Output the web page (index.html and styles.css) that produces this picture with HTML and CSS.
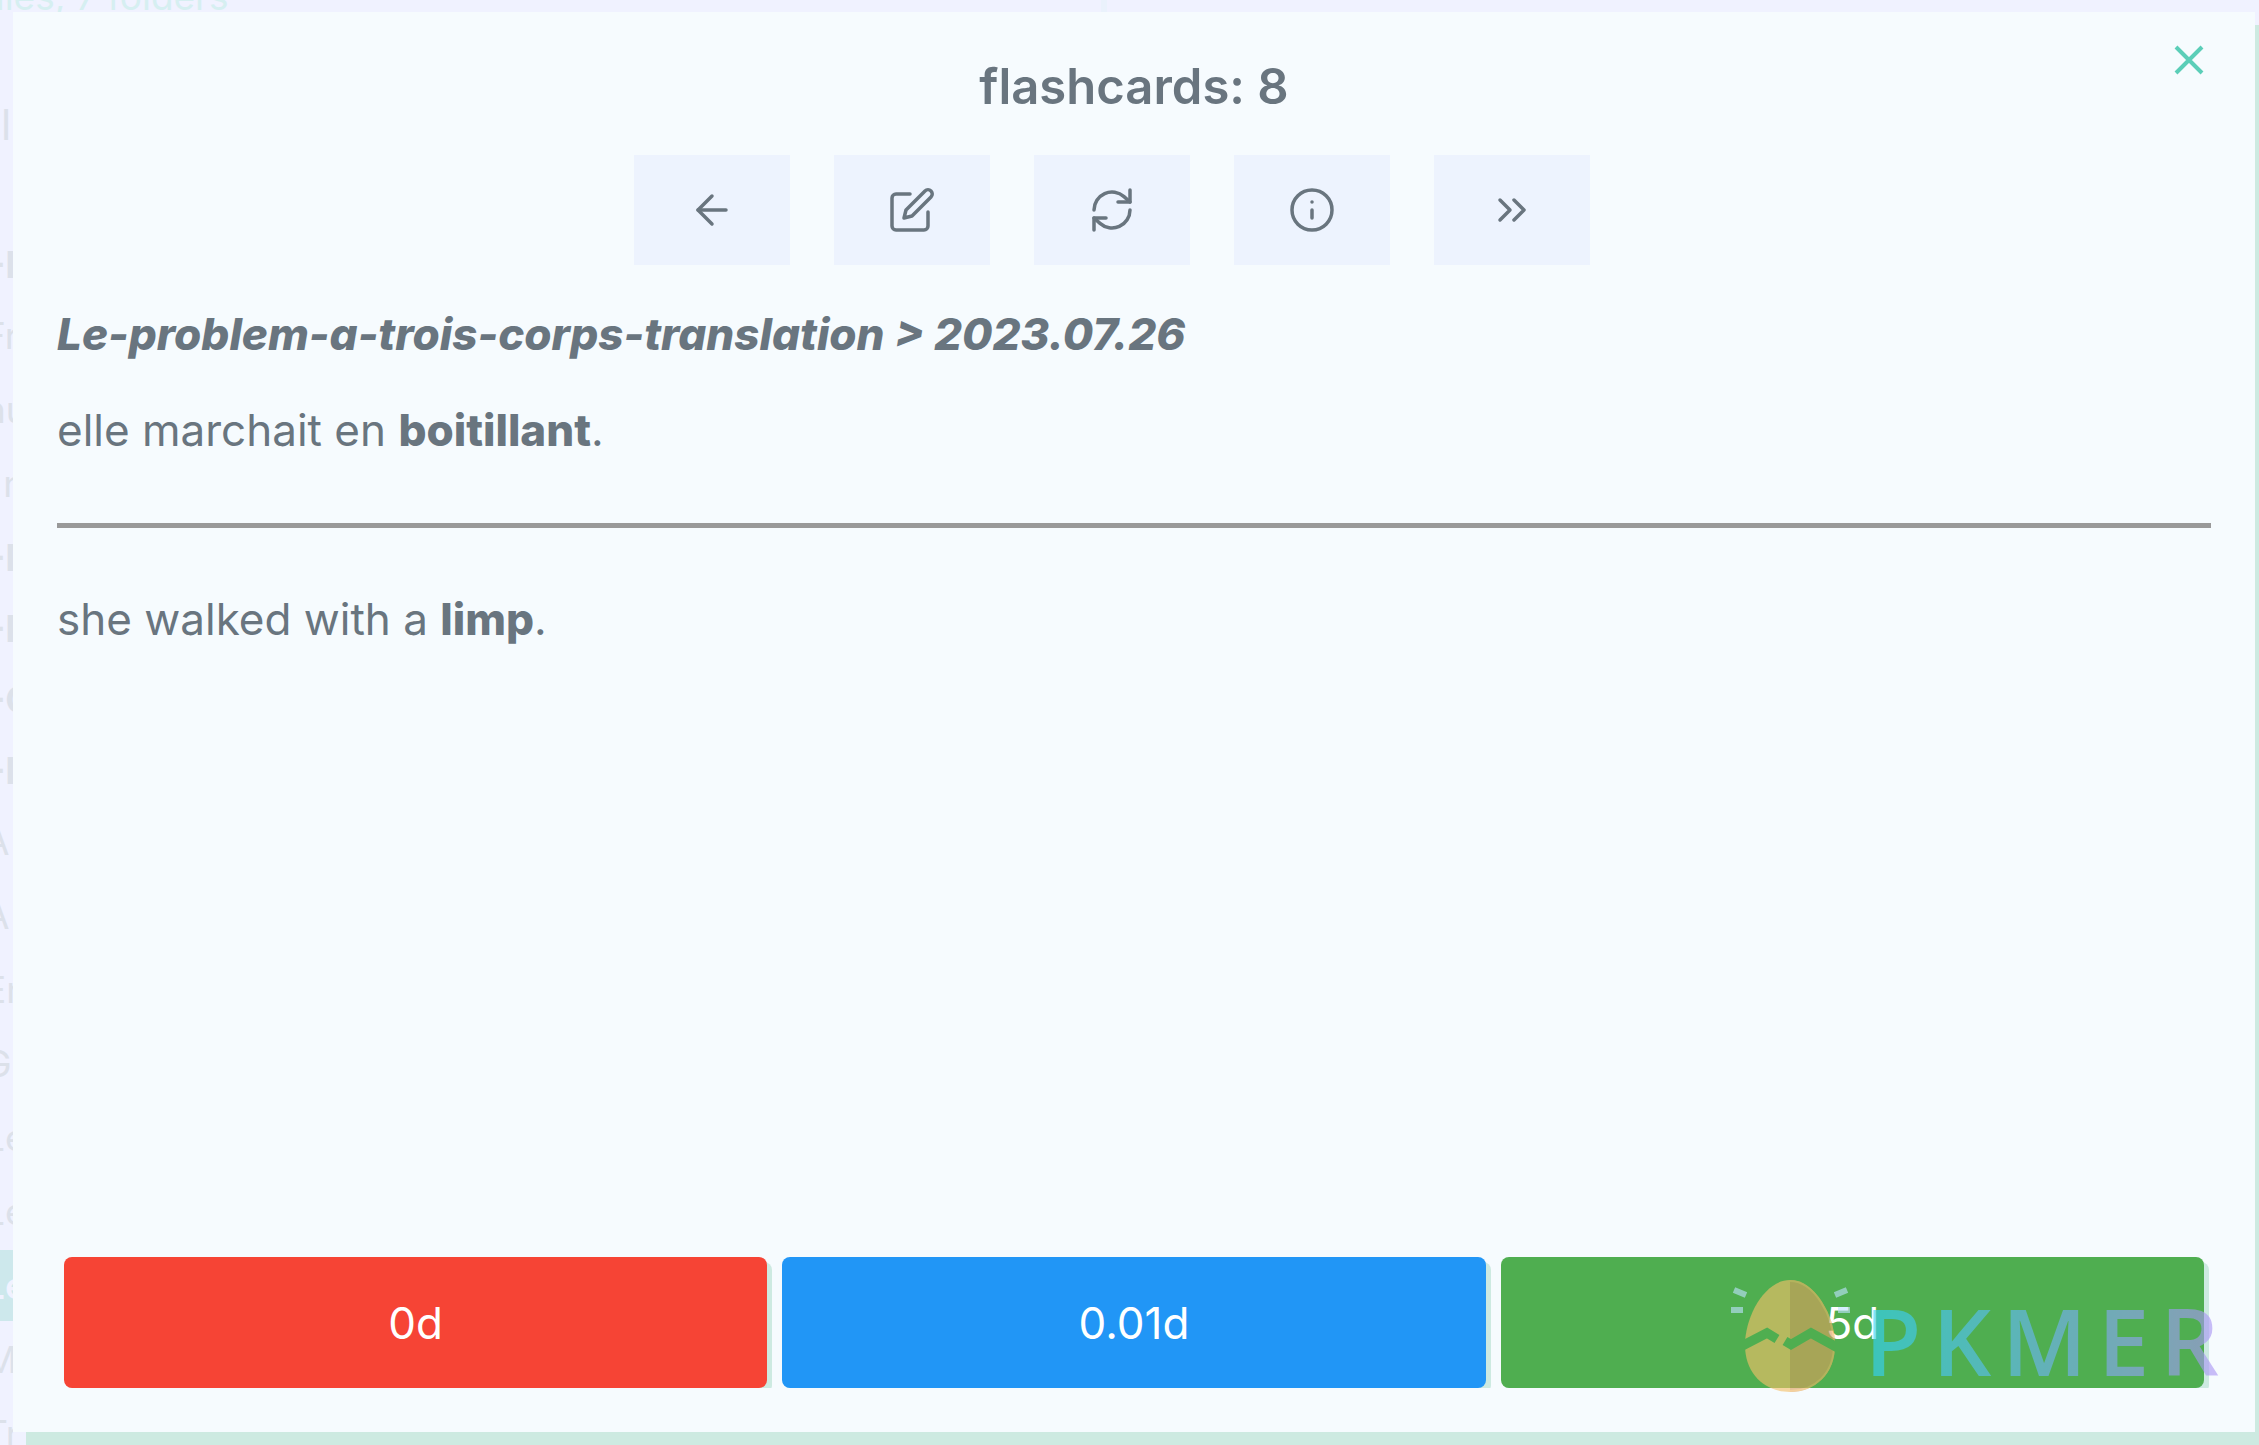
FILE: index.html
```html
<!DOCTYPE html>
<html lang="en">
<head>
<meta charset="utf-8">
<meta name="viewport" content="width=device-width, initial-scale=1">
<title>flashcards: 8</title>
<link rel="stylesheet" href="styles.css">
</head>
<body>
<div class="workspace">
  <aside class="sidebar">
    <p class="sidebar-count">files, 7 folders</p>
    <p class="sidebar-section">l</p>
    <ul class="tree">
      <li class="folder">-I</li>
      <li class="file">Fr</li>
      <li class="file">nu</li>
      <li class="file">i n</li>
      <li class="folder">-M</li>
      <li class="folder">-P</li>
      <li class="folder">-C</li>
      <li class="folder">-I</li>
      <li class="file">A</li>
      <li class="file">A</li>
      <li class="file">En</li>
      <li class="file">G</li>
      <li class="file">Le</li>
      <li class="file">Le</li>
      <li class="file active">Le</li>
      <li class="file">M</li>
      <li class="file">Tr</li>
    </ul>
  </aside>
</div>

<main class="modal" role="dialog" aria-labelledby="deck-title">
  <button class="close" type="button" aria-label="Close">
    <svg viewBox="0 0 30 30" aria-hidden="true"><path d="M2 2 28 28M28 2 2 28"/></svg>
  </button>
  <h1 class="title" id="deck-title">flashcards: 8</h1>
  <div class="toolbar">
    <button class="tool" type="button" aria-label="Back">
      <svg class="icon" viewBox="0 0 24 24" aria-hidden="true"><path d="m12 19-7-7 7-7"/><path d="M19 12H5"/></svg>
    </button>
    <button class="tool" type="button" aria-label="Edit card">
      <svg class="icon" viewBox="0 0 24 24" aria-hidden="true"><path d="M11 4H4a2 2 0 0 0-2 2v14a2 2 0 0 0 2 2h14a2 2 0 0 0 2-2v-7"/><path d="M18.5 2.5a2.12 2.12 0 0 1 3 3L12 15l-4 1 1-4Z"/></svg>
    </button>
    <button class="tool" type="button" aria-label="Reset card">
      <svg class="icon" viewBox="0 0 24 24" aria-hidden="true"><path d="M21 2v6h-6"/><path d="M3 12a9 9 0 0 1 15-6.7L21 8"/><path d="M3 22v-6h6"/><path d="M21 12a9 9 0 0 1-15 6.7L3 16"/></svg>
    </button>
    <button class="tool" type="button" aria-label="Card info">
      <svg class="icon" viewBox="0 0 24 24" aria-hidden="true"><circle cx="12" cy="12" r="10"/><path d="M12 16v-4"/><path d="M12 8h.01"/></svg>
    </button>
    <button class="tool" type="button" aria-label="Skip">
      <svg class="icon" viewBox="0 0 24 24" aria-hidden="true"><path d="m6 17 5-5-5-5"/><path d="m13 17 5-5-5-5"/></svg>
    </button>
  </div>
  <article class="card">
    <h2 class="context">Le-problem-a-trois-corps-translation &gt; 2023.07.26</h2>
    <p class="face">elle marchait en <strong>boitillant</strong>.</p>
    <hr class="divider">
    <p class="face">she walked with a <strong>limp</strong>.</p>
  </article>
  <div class="responses">
    <button class="response hard" type="button">0d</button>
    <button class="response good" type="button">0.01d</button>
    <button class="response easy" type="button">5d</button>
  </div>
</main>

<div class="watermark">
  <svg class="egg" viewBox="0 0 120 112" aria-hidden="true">
    <defs>
      <mask id="crack">
        <rect width="120" height="112" fill="#fff"/>
        <path d="M9 67 36 53 46 59M54 61 60 64.500 80 53 109 69" fill="none" stroke="#000" stroke-width="9.500"/>
      </mask>
    </defs>
    <g mask="url(#crack)">
      <path fill="#f5c069" d="M59 0C34 0 14 36 14 65s20 47 45 47Z"/>
      <path fill="#dda05c" d="M59 0c25 0 45 36 45 65s-20 47-45 47Z"/>
      <path fill="none" stroke="#f3b765" stroke-width="2" d="M59 1c24 0 44 35 44 64s-20 46-44 46"/>
    </g>
    <path fill="none" stroke="#bee3ff" stroke-width="6" d="M0 30h12M3 10l12 5M104 15l12-5M107 30h12"/>
  </svg>
  <span class="brand"><span>P</span><span>K</span><span>M</span><span>E</span><span>R</span></span>
</div>
</body>
</html>
```
FILE: styles.css
```css
:root {
  --text: #69757f;
  --surface: #f6fbfe;
  --shade: #cdeae1;
  --faint: #dce1ea;
}

* { box-sizing: border-box; }

body {
  margin: 0;
  height: 100vh;
  overflow: hidden;
  position: relative;
  background: #f0f2ff;
  color: var(--text);
  font-family: Inter, "Liberation Sans", sans-serif;
  font-size: 44px;
}

h1, h2, p, ul { margin: 0; padding: 0; }

button {
  border: 0;
  padding: 0;
  color: inherit;
  font: inherit;
  cursor: pointer;
}

/* File explorer behind the dialog */
.workspace {
  height: 100%;
  overflow: hidden;
}

.sidebar {
  width: 49%;
  height: 100%;
  border-right: 6px solid #eaf2fc;
  color: var(--faint);
  font-size: 37px;
}

.sidebar-count {
  margin: -25px 0 0 -18px;
  line-height: 44px;
  color: #d6eff1;
  white-space: nowrap;
}

.sidebar-section {
  padding: 80px 0 78px 1px;
  font-size: 42px;
  line-height: 52px;
}

.tree {
  list-style: none;
  line-height: 71px;
}

.file {
  margin-bottom: 3px;
  text-indent: -16px;
}

.folder {
  font-weight: 700;
  text-indent: -12px;
}

.active {
  background: #cde8ec;
  color: #f0f2ff;
  font-weight: 600;
}

/* Review dialog */
.modal {
  position: absolute;
  inset: 12px 4px 13px 13px;
  display: flex;
  flex-direction: column;
  padding: 44px;
  background: var(--surface);
  box-shadow: 13px 13px 0 var(--shade);
}

.close {
  position: absolute;
  top: 33px;
  right: 51px;
  width: 30px;
  height: 30px;
  background: none;
}

.close svg {
  display: block;
  fill: none;
  stroke: #5bceb8;
  stroke-width: 4;
}

.title {
  font-size: 49px;
  font-weight: 600;
  line-height: 62px;
  text-align: center;
}

.toolbar {
  display: flex;
  justify-content: center;
  margin: 37px 0 36px;
}

.tool {
  display: flex;
  align-items: center;
  justify-content: center;
  width: 156px;
  height: 110px;
  margin-right: 44px;
  background: #edf3fe;
}

.icon {
  width: 48px;
  height: 48px;
  fill: none;
  stroke: currentColor;
  stroke-width: 1.75;
  stroke-linecap: round;
  stroke-linejoin: round;
}

.card {
  flex: 1;
  line-height: 66px;
}

.context {
  margin-bottom: 30px;
  font-size: 44px;
  font-style: italic;
  font-weight: 800;
}

.face strong { font-weight: 800; }

.divider {
  height: 5px;
  margin: 60px 0 58px;
  border: 0;
  background: #999;
}

.responses {
  display: flex;
  gap: 15px;
  padding: 0 7px;
  overflow: hidden;
}

.response {
  flex: 1;
  height: 131px;
  border-radius: 8px;
  box-shadow: 5px 5px 0 var(--shade);
  color: #fff;
}

.hard { background: #f64435; }
.good { background: #2196f6; }
.easy { background: #4fae50; }

/* Site mark laid over the dialog */
.watermark {
  position: absolute;
  right: 40px;
  bottom: 53px;
  display: flex;
  align-items: flex-end;
  gap: 14px;
  opacity: 0.62;
  pointer-events: none;
}

.egg {
  width: 120px;
  height: 112px;
}

.brand {
  display: flex;
  gap: 11px;
  background: linear-gradient(90deg, #2fd5fc, #ad95f4);
  background-clip: text;
  color: transparent;
  font-family: "Open Sans", "Noto Sans", sans-serif;
  font-size: 92px;
  font-weight: 600;
  line-height: 102px;
}
```
